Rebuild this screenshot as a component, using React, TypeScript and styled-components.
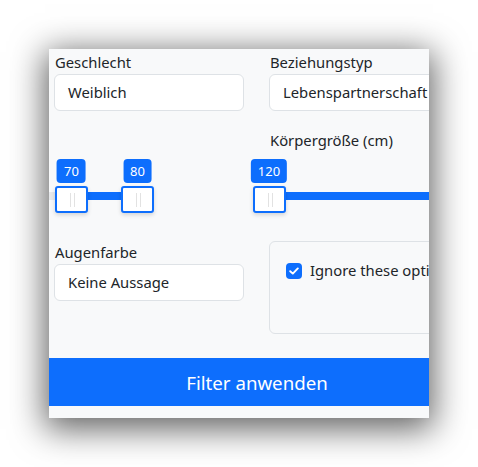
import React from 'react';
import styled, { createGlobalStyle } from 'styled-components';

const GlobalStyle = createGlobalStyle`
  html, body {
    margin: 0;
    padding: 0;
    background: #ffffff;
  }
  body {
    font-family: 'Noto Sans', 'Open Sans', sans-serif;
    color: #212529;
  }
`;

const Stage = styled.div`
  padding: 49px 0 0 49px;
  width: 478px;
  height: 467px;
  box-sizing: border-box;
`;

const Panel = styled.div`
  width: 380px;
  height: 369px;
  overflow: hidden;
  background: #f8f9fa;
  box-shadow: 0 7px 32px 4px rgba(0, 0, 0, 0.62);
`;

const Content = styled.div`
  width: 416px;
  padding: 1px 0 12px;
`;

const Grid = styled.div`
  display: grid;
  grid-template-columns: 190px 190px;
  column-gap: 25px;
  padding: 0 6px 0 5px;
`;

const Field = styled.div<{ $top?: number }>`
  display: flex;
  flex-direction: column;
  margin-top: ${(p) => p.$top ?? 0}px;
`;

const Label = styled.label`
  font-size: 14.8px;
  line-height: 24px;
  height: 24px;
  padding-left: 1px;
  white-space: nowrap;
`;

const FieldBox = styled.div`
  height: 37px;
  box-sizing: border-box;
  border: 1px solid #dee2e6;
  border-radius: 6px;
  background: #ffffff;
  padding: 0 12px 0 13px;
  font-size: 14.8px;
  line-height: 35px;
  white-space: nowrap;
  overflow: hidden;
`;

const SliderArea = styled.div<{ $bleed?: number }>`
  position: relative;
  height: 54px;
  margin-top: 7px;
  margin-left: -${(p) => p.$bleed ?? 0}px;
`;

const Track = styled.div`
  position: absolute;
  left: 0;
  top: 33px;
  height: 8px;
  background: #e6e8eb;
`;

const Connect = styled.div`
  position: absolute;
  top: 0;
  bottom: 0;
  background: #0d6efd;
`;

const Handle = styled.div`
  position: absolute;
  top: 27px;
  width: 33px;
  height: 27px;
  margin-left: -16.5px;
  box-sizing: border-box;
  border: 2px solid #0d6efd;
  border-radius: 3px;
  background: #ffffff;
  box-shadow: 0 2px 4px rgba(0, 0, 0, 0.15);

  &::before,
  &::after {
    content: '';
    position: absolute;
    top: 5px;
    width: 1px;
    height: 14px;
    background: #e2e2e2;
  }
  &::before {
    left: 13px;
  }
  &::after {
    left: 17px;
  }
`;

const Bubble = styled.div`
  position: absolute;
  top: 0;
  transform: translateX(-50%);
  height: 24px;
  padding: 0 7px;
  border-radius: 4px;
  background: #0d6efd;
  color: #ffffff;
  font-size: 13px;
  line-height: 24px;
  white-space: nowrap;
`;

const OptionBox = styled.div`
  height: 93px;
  box-sizing: border-box;
  border: 1px solid #dee2e6;
  border-radius: 6px;
  padding: 16px;
  margin-top: 1px;
  white-space: nowrap;
`;

const Check = styled.label`
  display: flex;
  align-items: flex-start;
  font-size: 14.8px;
  line-height: 24px;
`;

const CheckBox = styled.span`
  flex: none;
  width: 16px;
  height: 16px;
  margin: 5px 8px 0 0;
  border-radius: 4px;
  background: #0d6efd;
  display: flex;
  align-items: center;
  justify-content: center;
`;

const SubmitButton = styled.button`
  display: block;
  width: 100%;
  height: 48px;
  margin-top: 24px;
  border: none;
  border-radius: 0;
  background: #0d6efd;
  color: #ffffff;
  font-family: inherit;
  font-size: 18.7px;
  cursor: pointer;
`;

type SliderProps = {
  min: number;
  max: number;
  values: number[];
  connect: 'between' | 'upper';
  width: number;
  bleed?: number;
};

function RangeSlider({ min, max, values, connect, width, bleed }: SliderProps) {
  const pct = (v: number) => ((v - min) / (max - min)) * 100;
  const first = pct(values[0]);
  const last = connect === 'upper' ? 100 : pct(values[values.length - 1]);

  return (
    <SliderArea $bleed={bleed}>
      <Track style={{ width }}>
        <Connect style={{ left: `${first}%`, width: `${last - first}%` }} />
      </Track>
      {values.map((v) => (
        <React.Fragment key={v}>
          <Bubble style={{ left: `${(pct(v) / 100) * width}px` }}>{v}</Bubble>
          <Handle style={{ left: `${(pct(v) / 100) * width}px` }} />
        </React.Fragment>
      ))}
    </SliderArea>
  );
}

export default function App() {
  return (
    <>
      <GlobalStyle />
      <Stage>
        <Panel>
          <Content>
            <Grid>
              <Field>
                <Label>Geschlecht</Label>
                <FieldBox>Weiblich</FieldBox>
              </Field>
              <Field>
                <Label>Beziehungstyp</Label>
                <FieldBox>Lebenspartnerschaft</FieldBox>
              </Field>

              <Field $top={17}>
                <Label />
                <RangeSlider min={66.6} max={80} values={[70, 80]} connect="between" width={88.5} bleed={5} />
              </Field>
              <Field $top={17}>
                <Label>Körpergröße (cm)</Label>
                <RangeSlider min={120} max={220} values={[120]} connect="upper" width={190} />
              </Field>

              <Field $top={27}>
                <Label>Augenfarbe</Label>
                <FieldBox>Keine Aussage</FieldBox>
              </Field>
              <Field $top={27}>
                <OptionBox>
                  <Check>
                    <CheckBox>
                      <svg width="10" height="8" viewBox="0 0 10 8" fill="none">
                        <path d="M1.2 4.2 L3.8 6.6 L8.8 1.4" stroke="#fff" strokeWidth="1.9" strokeLinecap="round" strokeLinejoin="round" />
                      </svg>
                    </CheckBox>
                    Ignore these options
                  </Check>
                </OptionBox>
              </Field>
            </Grid>
            <SubmitButton>Filter anwenden</SubmitButton>
          </Content>
        </Panel>
      </Stage>
    </>
  );
}
